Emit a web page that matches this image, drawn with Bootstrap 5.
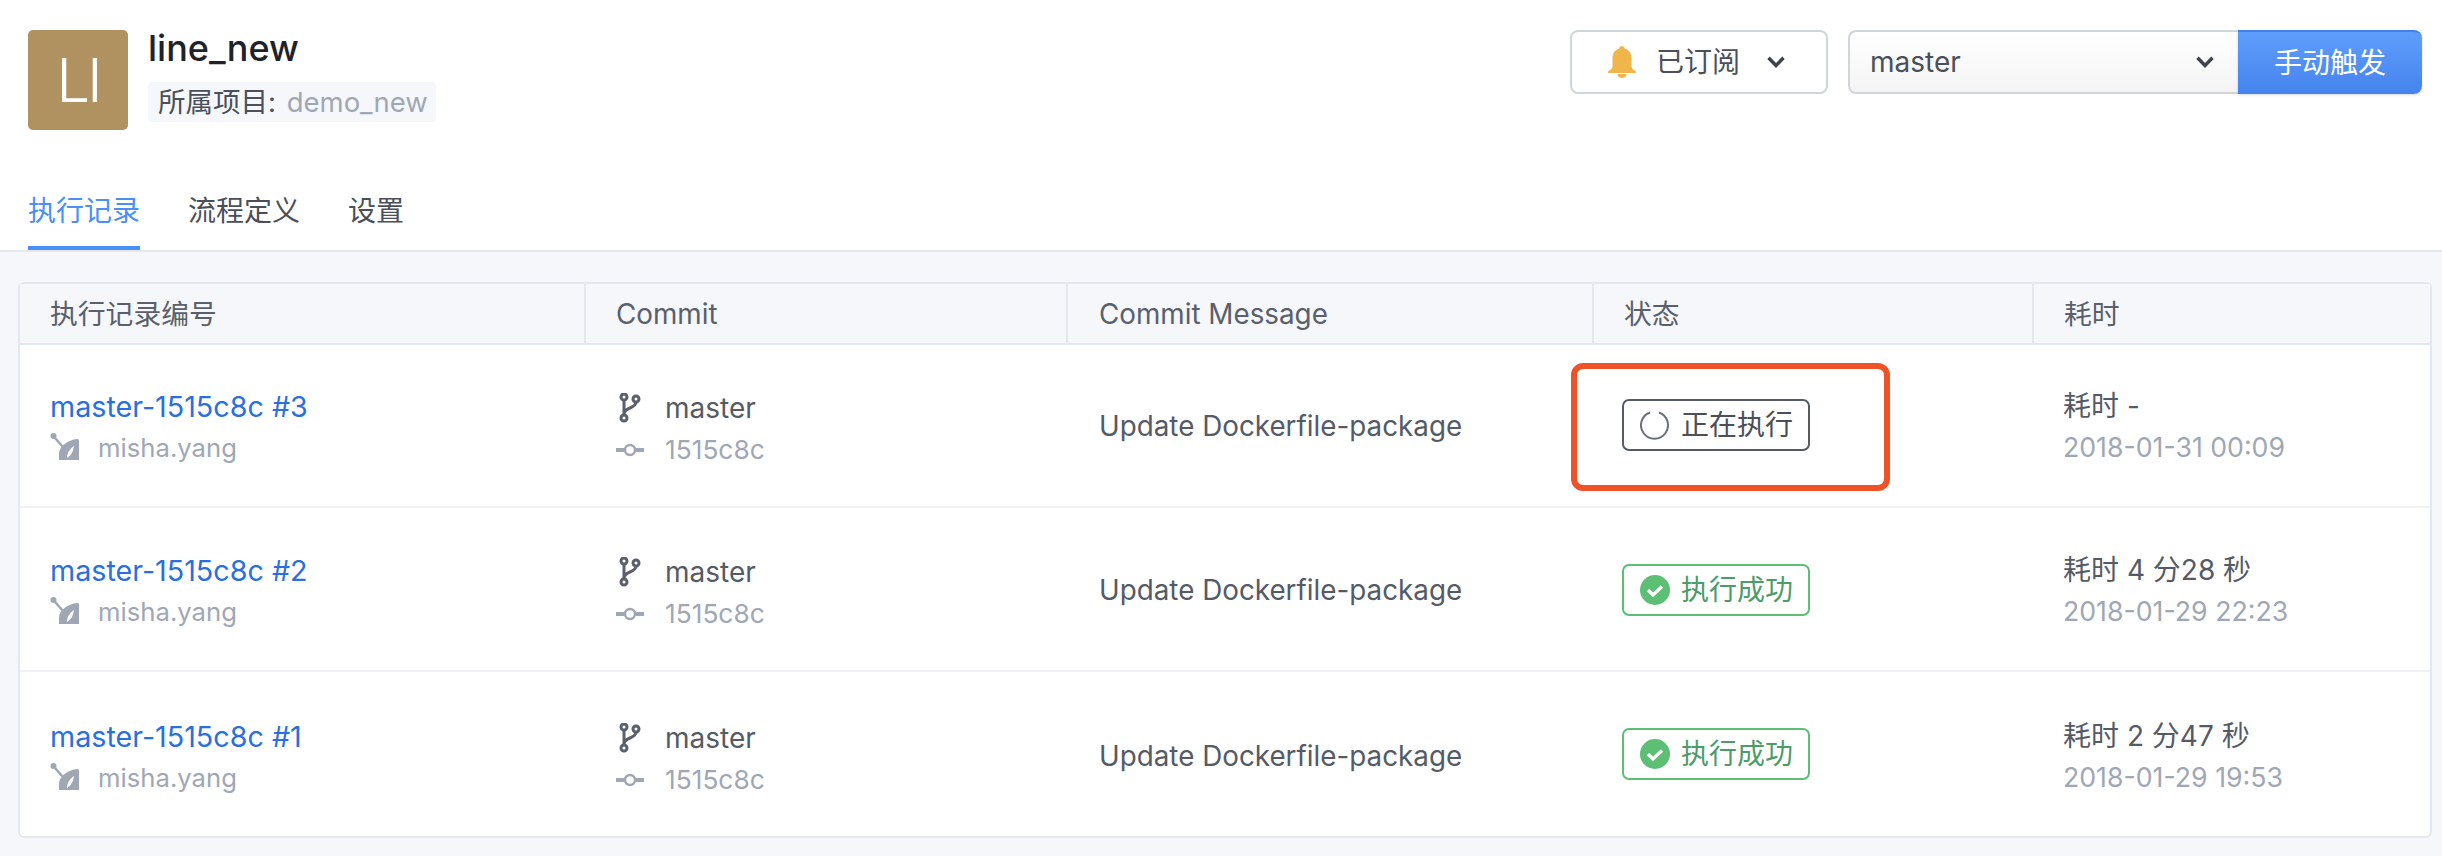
<!DOCTYPE html>
<html lang="zh-CN">
<head>
<meta charset="utf-8">
<title>line_new</title>
<link href="https://cdn.jsdelivr.net/npm/bootstrap@5.3.0/dist/css/bootstrap.min.css" rel="stylesheet">
<style>
html,body{height:856px;overflow:hidden}
body{background:#f5f7fb;font-family:Inter,"Noto Sans CJK SC",sans-serif;font-size:28px;color:#4a4f5a}
.top-pane{background:#fff;height:252px;border-bottom:2px solid #e4e7ee;padding:30px 20px 0 28px}
.avatar-box{width:100px;height:100px;background:#af9260;color:#fff;font-size:60px;font-weight:300;letter-spacing:-3px;border-radius:5px;line-height:1;margin-right:20px}
.proj-title{font-size:36px;font-weight:500;color:#1f2229;line-height:40px;margin-top:-2px}
.proj-tag{display:inline-block;background:#f5f7fb;border-radius:4px;font-size:27.500px;line-height:40px;height:40px;padding:0 8px 0 10px;margin-top:14px;color:#4a4f5a}
.proj-tag span{color:#a0a7b4;margin-left:3px}
.sub-btn{width:258px;height:64px;background:#fff;border:2px solid #d0d4db;border-radius:8px;font-size:28px;color:#4a4f5a;padding:0 0 0 36px;margin-right:20px}
.sub-btn:hover{background:#fff}
.chev-gap{margin-left:27px}
.trigger-group{width:574px;height:64px;flex-wrap:nowrap}
.branch-select{flex:1;height:64px;border:2px solid #d0d4db;border-right:0;border-radius:8px 0 0 8px;background:linear-gradient(#fff,#f4f4f4);font-size:28px;color:#4a4f5a;padding:0 25px 0 20px;line-height:60px}
.trigger-btn{width:184px;height:64px;background:linear-gradient(#5f9dfb,#4583ee);border:0;border-top:2px solid #3f80ea;border-radius:0 8px 8px 0;color:#fff;font-size:28px;padding:0;box-shadow:0 1px 3px rgba(0,0,0,.15)}
.tab-row{margin-top:56px;gap:48px}
.tab-row .nav-link{height:64px;line-height:34px;font-size:28px;color:#4a4f5a;border-bottom:4px solid transparent;padding:8px 0 0}
.tab-row .nav-link.active{color:#4a8ff5;border-bottom-color:#4a8ff5}
.list-wrap{margin:30px 10px 0 18px;border:2px solid #e4e7ee;border-radius:6px;background:#fff}
.run-table{table-layout:fixed;width:100%;margin:0;font-size:28px;color:#555b66;--bs-table-bg:transparent}
.run-table th{background:#f5f7fb;font-weight:400;height:60px;padding:3px 0 0 30px;vertical-align:middle;border-bottom:2px solid #e4e7ee;border-right:2px solid #e4e7ee;color:#5a606b;font-size:27.800px}
.run-table th:last-child{border-right:0}
.run-table th:nth-child(3){padding-left:31px}
.run-table td{height:164px;padding:0 0 0 30px;vertical-align:middle;border-bottom:2px solid #f0f1f6;color:#555b66}
.run-table td:nth-child(3){padding-left:32px;font-size:27.800px}
.run-table tbody tr:first-child td{height:163px}
.run-table tr:last-child td{border-bottom:0;height:165px}
.run-table tbody tr:nth-child(1) td:not(.state-cell){padding-top:2px}
.run-table tbody tr:nth-child(2) td:not(.state-cell){padding-top:3px}
.run-table tbody tr:nth-child(3) td:not(.state-cell){padding-top:5px}
.run-table tbody tr:nth-child(2) td.state-cell{padding-top:2px}
.run-link{color:#2a6fe0;text-decoration:none;line-height:41px;display:block;font-size:28.700px}
.muted-line{color:#a0a7b4;line-height:41px;font-size:25.700px}
.muted-line svg,.branch-line svg{flex:none}
.line-text{margin-left:2px}
.branch-line{line-height:42px;height:42px;font-size:28px;position:relative;top:2px}
.branch-line.muted-line{font-size:26.300px}
.state-tag{width:188px;height:52px;border:2px solid #555a66;border-radius:7px;font-size:28px;padding-left:16px;gap:11px;color:#4a4f5a;line-height:1}
.state-tag.ok{border-color:#5cbf74;color:#4b9c68}
.state-wrap{position:relative;width:188px;margin-top:-1px;left:-1px}
.red-mark{position:absolute;left:-51px;top:-36px;width:319px;height:128px;border:6px solid #f05227;border-radius:12px;pointer-events:none}
.time-cell{line-height:41px}
.time-cell .muted-line{font-size:26.700px}
</style>
</head>
<body>
<div class="top-pane">
  <div class="d-flex justify-content-between align-items-start">
    <div class="d-flex">
      <div class="avatar-box d-flex align-items-center justify-content-center">LI</div>
      <div>
        <div class="proj-title">line_new</div>
        <div class="proj-tag">所属项目: <span>demo_new</span></div>
      </div>
    </div>
    <div class="d-flex">
      <button class="btn sub-btn d-flex align-items-center" type="button">
        <svg width="28" height="32" viewBox="0 0 28 32" class="me-3"><path fill="#f0b64c" d="M14 0c1.600 0 2.600 1 2.800 2.700C21.500 4 23.500 7.500 23.500 12v8c0 2.500 2 4 4.500 5.500V27H0v-1.500C2.500 24 4.500 22.500 4.500 20v-8c0-4.500 2-8 6.700-9.300C11.400 1 12.400 0 14 0z"/><path fill="#f0b64c" d="M9.500 28h9c0 2.500-2 4-4.500 4s-4.500-1.500-4.500-4z"/></svg>
        <span class="ms-1">已订阅</span>
        <svg width="18" height="12" viewBox="0 0 18 12" class="chev-gap"><path fill="none" stroke="#3d424d" stroke-width="3.400" d="M1.500 1.800 9 9.500l7.500-7.700"/></svg>
      </button>
      <div class="input-group trigger-group">
        <div class="branch-select d-flex align-items-center justify-content-between">
          <span>master</span>
          <svg width="18" height="12" viewBox="0 0 18 12"><path fill="none" stroke="#3d424d" stroke-width="3.400" d="M1.500 1.800 9 9.500l7.500-7.700"/></svg>
        </div>
        <button class="btn trigger-btn" type="button">手动触发</button>
      </div>
    </div>
  </div>
  <ul class="nav tab-row">
    <li class="nav-item"><a class="nav-link active" href="#">执行记录</a></li>
    <li class="nav-item"><a class="nav-link" href="#">流程定义</a></li>
    <li class="nav-item"><a class="nav-link" href="#">设置</a></li>
  </ul>
</div>

<div class="list-wrap">
  <table class="table run-table">
    <colgroup><col style="width:565px"><col style="width:482px"><col style="width:526px"><col style="width:440px"><col></colgroup>
    <thead><tr><th>执行记录编号</th><th>Commit</th><th>Commit Message</th><th>状态</th><th>耗时</th></tr></thead>
    <tbody>
      <tr>
        <td><a class="run-link" href="#">master-1515c8c #3</a>
          <div class="muted-line d-flex align-items-center gap-3"><svg width="30" height="28" viewBox="0 0 30 28"><circle cx="3.500" cy="3" r="3" fill="#a0a7b4"/><path d="M5 5l8 9" stroke="#a0a7b4" stroke-width="2.500"/><path fill="#a0a7b4" fill-rule="evenodd" d="M9 27v-6c0-8 9-14 18-15 1 0 2 .5 2 2v19H9zm8-2c0-6 4-10 7-12-1 5-2 9-7 12z"/></svg><span class="line-text">misha.yang</span></div></td>
        <td><div class="branch-line d-flex align-items-center gap-3"><svg width="32" height="30" viewBox="0 0 32 30"><g fill="none" stroke="#5a606b" stroke-width="3"><circle cx="9" cy="4" r="3"/><circle cx="21" cy="6" r="3"/><circle cx="9" cy="25" r="3"/><path d="M9 7v15M21 9c0 7-12 5-12 12"/></g></svg><span class="line-text">master</span></div>
          <div class="branch-line muted-line d-flex align-items-center gap-3"><svg width="32" height="14" viewBox="0 0 32 14"><g fill="none" stroke="#a0a7b4"><circle cx="15" cy="7" r="5" stroke-width="2.500"/><path d="M1 7h9M20 7h9" stroke-width="4"/></g></svg><span class="line-text">1515c8c</span></div></td>
        <td>Update Dockerfile-package</td>
        <td class="state-cell"><div class="state-wrap"><div class="state-tag d-flex align-items-center"><svg width="30" height="30" viewBox="0 0 30 30"><path fill="none" stroke="#6a6f7a" stroke-width="2" d="M19 2.500A13.500 13.500 0 1 1 10 2.500"/></svg><span>正在执行</span></div><div class="red-mark"></div></div></td>
        <td class="time-cell"><div>耗时 -</div><div class="muted-line">2018-01-31 00:09</div></td>
      </tr>
      <tr>
        <td><a class="run-link" href="#">master-1515c8c #2</a>
          <div class="muted-line d-flex align-items-center gap-3"><svg width="30" height="28" viewBox="0 0 30 28"><circle cx="3.500" cy="3" r="3" fill="#a0a7b4"/><path d="M5 5l8 9" stroke="#a0a7b4" stroke-width="2.500"/><path fill="#a0a7b4" fill-rule="evenodd" d="M9 27v-6c0-8 9-14 18-15 1 0 2 .5 2 2v19H9zm8-2c0-6 4-10 7-12-1 5-2 9-7 12z"/></svg><span class="line-text">misha.yang</span></div></td>
        <td><div class="branch-line d-flex align-items-center gap-3"><svg width="32" height="30" viewBox="0 0 32 30"><g fill="none" stroke="#5a606b" stroke-width="3"><circle cx="9" cy="4" r="3"/><circle cx="21" cy="6" r="3"/><circle cx="9" cy="25" r="3"/><path d="M9 7v15M21 9c0 7-12 5-12 12"/></g></svg><span class="line-text">master</span></div>
          <div class="branch-line muted-line d-flex align-items-center gap-3"><svg width="32" height="14" viewBox="0 0 32 14"><g fill="none" stroke="#a0a7b4"><circle cx="15" cy="7" r="5" stroke-width="2.500"/><path d="M1 7h9M20 7h9" stroke-width="4"/></g></svg><span class="line-text">1515c8c</span></div></td>
        <td>Update Dockerfile-package</td>
        <td class="state-cell"><div class="state-wrap"><div class="state-tag ok d-flex align-items-center"><svg width="30" height="30" viewBox="0 0 30 30"><circle cx="15" cy="15" r="15" fill="#5cbf74"/><path fill="none" stroke="#fff" stroke-width="3.400" d="M8 15l5 5 9-8.500"/></svg><span>执行成功</span></div></div></td>
        <td class="time-cell"><div>耗时 4 分28 秒</div><div class="muted-line">2018-01-29 22:23</div></td>
      </tr>
      <tr>
        <td><a class="run-link" href="#">master-1515c8c #1</a>
          <div class="muted-line d-flex align-items-center gap-3"><svg width="30" height="28" viewBox="0 0 30 28"><circle cx="3.500" cy="3" r="3" fill="#a0a7b4"/><path d="M5 5l8 9" stroke="#a0a7b4" stroke-width="2.500"/><path fill="#a0a7b4" fill-rule="evenodd" d="M9 27v-6c0-8 9-14 18-15 1 0 2 .5 2 2v19H9zm8-2c0-6 4-10 7-12-1 5-2 9-7 12z"/></svg><span class="line-text">misha.yang</span></div></td>
        <td><div class="branch-line d-flex align-items-center gap-3"><svg width="32" height="30" viewBox="0 0 32 30"><g fill="none" stroke="#5a606b" stroke-width="3"><circle cx="9" cy="4" r="3"/><circle cx="21" cy="6" r="3"/><circle cx="9" cy="25" r="3"/><path d="M9 7v15M21 9c0 7-12 5-12 12"/></g></svg><span class="line-text">master</span></div>
          <div class="branch-line muted-line d-flex align-items-center gap-3"><svg width="32" height="14" viewBox="0 0 32 14"><g fill="none" stroke="#a0a7b4"><circle cx="15" cy="7" r="5" stroke-width="2.500"/><path d="M1 7h9M20 7h9" stroke-width="4"/></g></svg><span class="line-text">1515c8c</span></div></td>
        <td>Update Dockerfile-package</td>
        <td class="state-cell"><div class="state-wrap"><div class="state-tag ok d-flex align-items-center"><svg width="30" height="30" viewBox="0 0 30 30"><circle cx="15" cy="15" r="15" fill="#5cbf74"/><path fill="none" stroke="#fff" stroke-width="3.400" d="M8 15l5 5 9-8.500"/></svg><span>执行成功</span></div></div></td>
        <td class="time-cell"><div>耗时 2 分47 秒</div><div class="muted-line">2018-01-29 19:53</div></td>
      </tr>
    </tbody>
  </table>
</div>
<script src="https://cdn.jsdelivr.net/npm/bootstrap@5.3.0/dist/js/bootstrap.bundle.min.js"></script>
</body>
</html>
